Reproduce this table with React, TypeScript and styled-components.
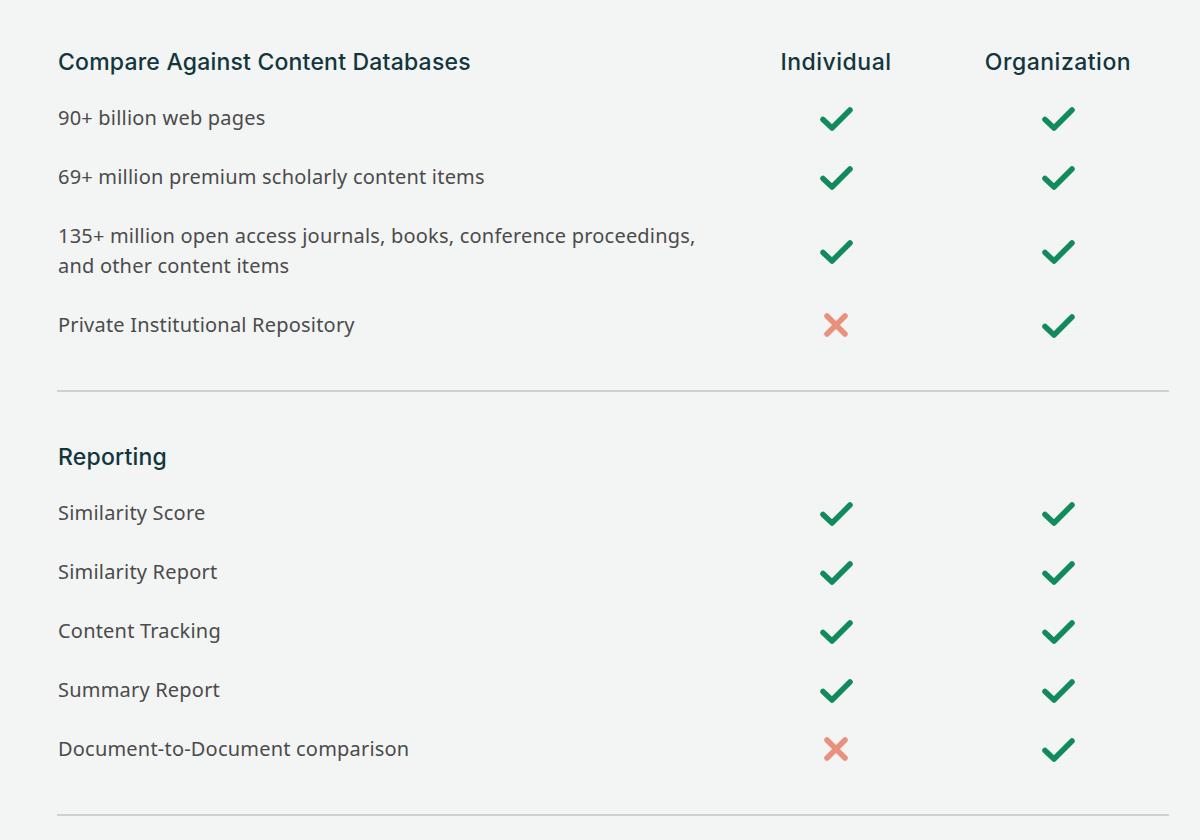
import React from "react";
import styled, { createGlobalStyle } from "styled-components";

const Global = createGlobalStyle`
  html, body { margin: 0; padding: 0; background: #f3f4f4; }
  body { font-family: "Noto Sans", sans-serif; }
`;

const Page = styled.div`
  width: 1200px;
  min-height: 840px;
  box-sizing: border-box;
  padding: 47px 31px 0 57px;
  background: #f3f4f4;
`;

const Section = styled.section`
  display: flex;
  flex-direction: column;
`;

const Row = styled.div<{ $head?: boolean }>`
  display: grid;
  grid-template-columns: 1fr 222px 222px;
  align-items: center;
  margin-top: ${(p) => (p.$head ? "0" : "29px")};
  &:nth-child(2) { margin-top: 26px; }
`;

const Heading = styled.h2`
  margin: 0;
  font-family: "Inter", sans-serif;
  font-weight: 500;
  font-size: 23px;
  line-height: 30px;
  color: #12363c;
  padding-left: 1px;
  letter-spacing: 0.2px;
`;

const ColHead = styled.div`
  font-family: "Inter", sans-serif;
  font-weight: 500;
  font-size: 23px;
  line-height: 30px;
  color: #12363c;
  text-align: center;
  letter-spacing: 0.5px;
`;

const Label = styled.div`
  font-size: 20px;
  line-height: 30px;
  color: #4b4b4b;
  padding-left: 1px;
  max-width: 660px;
  letter-spacing: 0.2px;
`;

const Cell = styled.div`
  display: flex;
  justify-content: center;
  align-items: center;
`;

const Divider = styled.hr`
  margin: 50px 0 50px;
  border: 0;
  height: 2px;
  background: #cfd0d0;
  width: 100%;
`;

const Check = () => (
  <svg width="36" height="30" viewBox="0 0 36 30">
    <path
      d="M5 16.5 L14 25 L32 7"
      fill="none"
      stroke="#118a5c"
      strokeWidth="5.5"
      strokeLinecap="round"
      strokeLinejoin="round"
    />
  </svg>
);

const Cross = () => (
  <svg width="30" height="30" viewBox="0 0 30 30">
    <path
      d="M6 6 L24 24 M24 6 L6 24"
      fill="none"
      stroke="#ea917d"
      strokeWidth="5.5"
      strokeLinecap="round"
    />
  </svg>
);

type Item = { label: React.ReactNode; ind: boolean; org: boolean };

const sections: { title: string; showCols: boolean; items: Item[] }[] = [
  {
    title: "Compare Against Content Databases",
    showCols: true,
    items: [
      { label: "90+ billion web pages", ind: true, org: true },
      { label: "69+ million premium scholarly content items", ind: true, org: true },
      {
        label: "135+ million open access journals, books, conference proceedings, and other content items",
        ind: true,
        org: true,
      },
      { label: "Private Institutional Repository", ind: false, org: true },
    ],
  },
  {
    title: "Reporting",
    showCols: false,
    items: [
      { label: "Similarity Score", ind: true, org: true },
      { label: "Similarity Report", ind: true, org: true },
      { label: "Content Tracking", ind: true, org: true },
      { label: "Summary Report", ind: true, org: true },
      { label: "Document-to-Document comparison", ind: false, org: true },
    ],
  },
];

export default function App() {
  return (
    <Page>
      <Global />
      {sections.map((s) => (
        <React.Fragment key={s.title}>
          <Section>
            <Row $head>
              <Heading>{s.title}</Heading>
              {s.showCols ? (
                <>
                  <ColHead>Individual</ColHead>
                  <ColHead>Organization</ColHead>
                </>
              ) : (
                <>
                  <div />
                  <div />
                </>
              )}
            </Row>
            {s.items.map((it, j) => (
              <Row key={j}>
                <Label>{it.label}</Label>
                <Cell>{it.ind ? <Check /> : <Cross />}</Cell>
                <Cell>{it.org ? <Check /> : <Cross />}</Cell>
              </Row>
            ))}
          </Section>
          <Divider />
        </React.Fragment>
      ))}
    </Page>
  );
}
